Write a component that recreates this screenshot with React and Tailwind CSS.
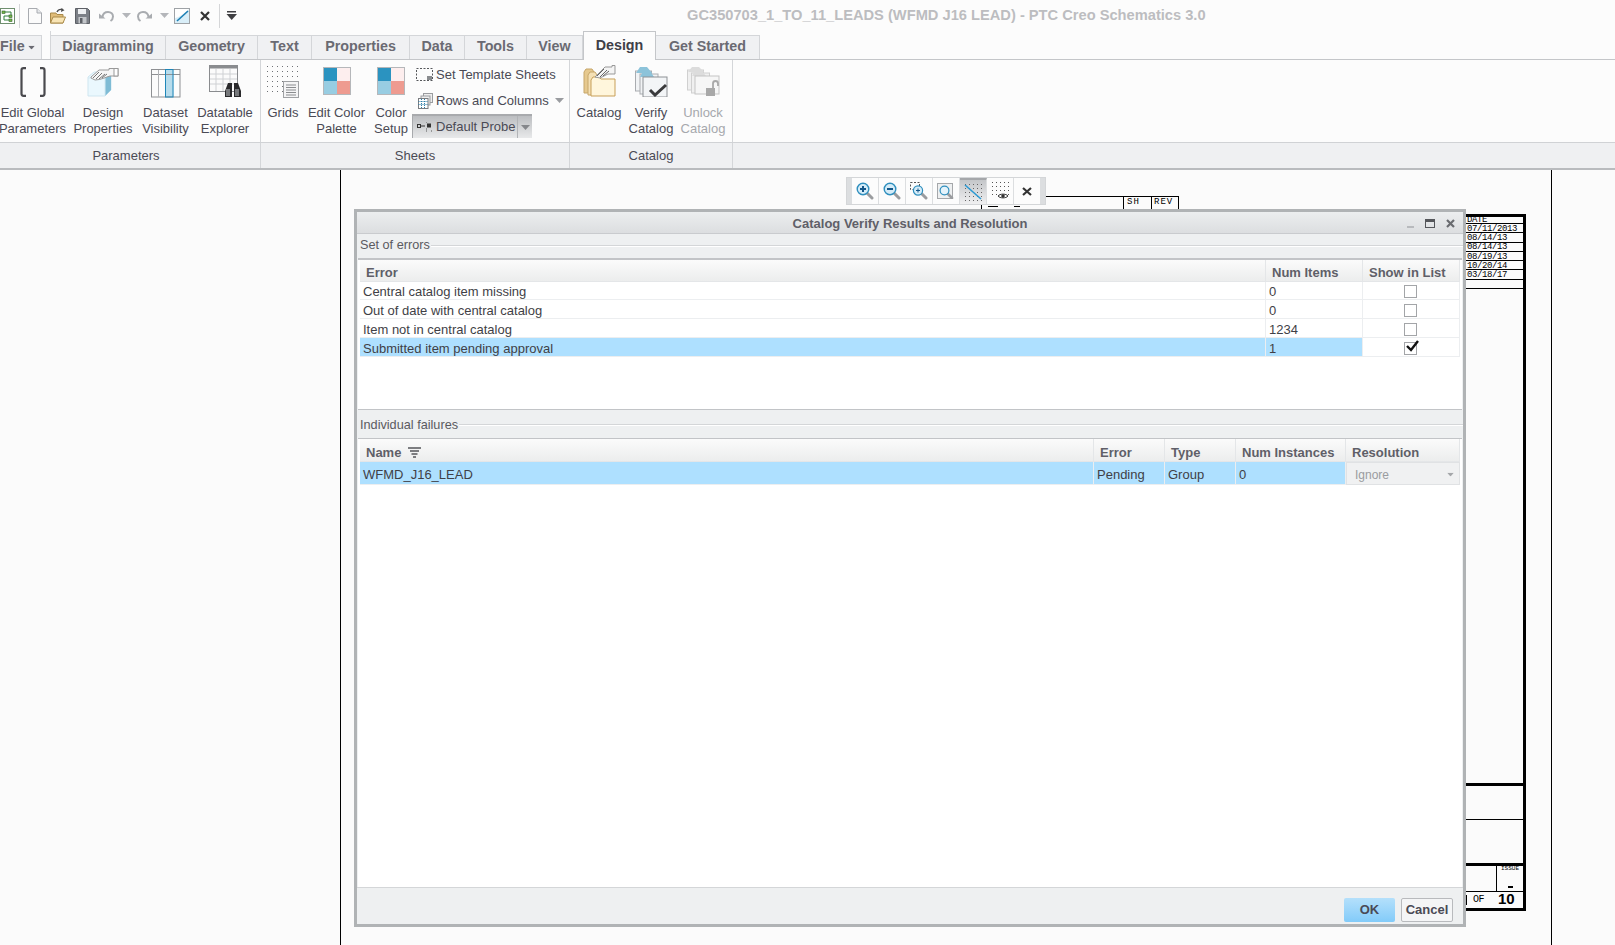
const FONT = 'font-["Liberation_Sans",Arial,sans-serif]'

function Caret({ color = '#8f9196', className = '' }) {
    return (
        <svg width="9" height="5" viewBox="0 0 9 5" className={className}>
            <path d="M0 0H9L4.5 5Z" fill={color} />
        </svg>
    )
}

function QuickAccess() {
    return (
        <div className="flex items-center w-[687px] h-[31px] shrink-0">
            <svg width="15" height="16" viewBox="0 0 15 16">
                <rect x="0.5" y="0.5" width="14" height="15" fill="#fff" stroke="#6f8f6f" />
                <path d="M3 4H11V8H4V12H11" fill="none" stroke="#2f7d3a" />
                <rect x="2" y="3" width="3" height="2.5" fill="#79b84a" stroke="#2f5f2a" strokeWidth="0.6" />
                <rect x="9" y="7" width="3" height="2.5" fill="#79b84a" stroke="#2f5f2a" strokeWidth="0.6" />
                <rect x="9" y="11" width="3" height="2.5" fill="#79b84a" stroke="#2f5f2a" strokeWidth="0.6" />
            </svg>
            <div className="w-px h-[24px] bg-[#d5d6d8] ml-[4px]" />
            <svg width="14" height="16" viewBox="0 0 14 16" className="ml-[8px]">
                <path d="M0.5 0.5H9L13.5 5V15.5H0.5Z" fill="#fbfbfb" stroke="#a8abb0" />
                <path d="M9 0.5V5H13.5" fill="#e5e7ea" stroke="#a8abb0" />
            </svg>
            <svg width="16" height="16" viewBox="0 0 16 16" className="ml-[8px]">
                <path d="M0.5 15V5H6L7 6.5H13V15Z" fill="#e0bc78" stroke="#a98a4a" />
                <path d="M0.5 15L3 9H15.5L13 15Z" fill="#f8e4b4" stroke="#a98a4a" />
                <path d="M7 4C8 1.5 10 1 12.5 1.5" fill="none" stroke="#4d4d4d" strokeWidth="1.4" />
                <path d="M11.5 0L14.5 2.2L11 4Z" fill="#4d4d4d" />
            </svg>
            <svg width="15" height="16" viewBox="0 0 15 16" className="ml-[9px]">
                <path d="M0.5 0.5H12.5L14.5 2.5V15.5H0.5Z" fill="#7c8087" stroke="#5d6066" />
                <rect x="3" y="1" width="8" height="5" fill="#eef0f2" />
                <rect x="3.5" y="9" width="8" height="6.5" fill="#c3c6ca" />
                <rect x="5" y="10" width="2.5" height="5" fill="#5d6066" />
            </svg>
            <svg width="15" height="12" viewBox="0 0 15 12" className="ml-[9px]">
                <path d="M3.5 7C4 3 7 2 9 2C12 2 14 4 14 6.5C14 8.5 13 10 11.5 11" fill="none" stroke="#a9acb0" strokeWidth="2" />
                <path d="M0 3.5L6.5 8.5H0Z" fill="#a9acb0" />
            </svg>
            <Caret color="#b4b6ba" className="ml-[8px]" />
            <svg width="15" height="12" viewBox="0 0 15 12" className="ml-[6px]">
                <path d="M11.5 7C11 3 8 2 6 2C3 2 1 4 1 6.5C1 8.5 2 10 3.5 11" fill="none" stroke="#a9acb0" strokeWidth="2" />
                <path d="M15 3.5L8.5 8.5H15Z" fill="#a9acb0" />
            </svg>
            <Caret color="#b4b6ba" className="ml-[8px]" />
            <svg width="16" height="16" viewBox="0 0 16 16" className="ml-[5px]">
                <rect x="0.5" y="0.5" width="15" height="15" fill="#d9eef8" stroke="#9ea2a6" />
                <path d="M1 1H15C11 5 6 9 1 10Z" fill="#fff" />
                <path d="M3 13L14 3" stroke="#1d7fb4" strokeWidth="1.6" />
            </svg>
            <svg width="10" height="10" viewBox="0 0 10 10" className="ml-[10px]">
                <path d="M1 1L9 9M9 1L1 9" stroke="#333" strokeWidth="2.2" />
            </svg>
            <div className="w-px h-[24px] bg-[#d5d6d8] ml-[9px]" />
            <svg width="12" height="9" viewBox="0 0 12 9" className="ml-[6px]">
                <rect x="1" y="0" width="9" height="1.5" fill="#3f3f42" />
                <path d="M0.5 3H11L5.7 9Z" fill="#3f3f42" />
            </svg>
        </div>
    )
}

function Tab({ label, width, active }) {
    if (active) {
        return (
            <div className={`${width} h-[29px] -mb-px z-10 flex items-center justify-center bg-[#fcfcfc] border border-b-0 border-[#c4c6c9] text-[14.3px] font-bold text-[#3f3f48]`}>
                {label}
            </div>
        )
    }
    return (
        <div className={`${width} h-[24px] pb-[2px] flex items-center justify-center bg-[#f0f1f3] border-t border-r border-[#d4d6d9] text-[14.3px] font-bold text-[#6a6a72]`}>
            {label}
        </div>
    )
}

function TabRow() {
    return (
        <div className="flex items-end h-[29px] border-b border-[#c4c6c9]">
            <div className="w-[42px] h-[24px] pb-[2px] flex items-center bg-[#f0f1f3] border-t border-r border-[#d4d6d9] text-[14.3px] font-bold text-[#6a6a72]">
                File
                <Caret color="#6a6a72" className="ml-[2px] mt-[2px] scale-75" />
            </div>
            <div className="w-[8px]" />
            <div className="flex items-end border-l border-[#d4d6d9]">
                <Tab label="Diagramming" width="w-[115px]" />
                <Tab label="Geometry" width="w-[92px]" />
                <Tab label="Text" width="w-[54px]" />
                <Tab label="Properties" width="w-[98px]" />
                <Tab label="Data" width="w-[55px]" />
                <Tab label="Tools" width="w-[62px]" />
                <Tab label="View" width="w-[56px]" />
                <Tab label="Design" width="w-[73px]" active />
                <Tab label="Get Started" width="w-[104px]" />
            </div>
        </div>
    )
}

function RibbonItem({ width, lines, disabled, children }) {
    return (
        <div className={`${width} shrink-0 flex flex-col items-center`}>
            <div className="h-[45px] w-full flex items-start justify-center pt-[5px]">{children}</div>
            <div className={`text-[13px] leading-[16px] text-center whitespace-nowrap ${disabled ? 'text-[#a6a8ad]' : 'text-[#4a4a55]'}`}>
                {lines.map((l) => <div key={l}>{l}</div>)}
            </div>
        </div>
    )
}

function GroupLabel({ width, label, pad = '' }) {
    return (
        <div className={`${width} ${pad} shrink-0 flex items-center justify-center text-[13px] text-[#4a4a55] border-r border-[#d4d6d9]`}>
            {label}
        </div>
    )
}

function ColorIcon() {
    return (
        <svg width="28" height="28" viewBox="0 0 28 28" className="mt-[2px]">
            <rect x="0" y="0" width="14" height="14" fill="#2b93c0" />
            <rect x="14" y="0" width="14" height="14" fill="#fdeeee" />
            <rect x="0" y="14" width="14" height="14" fill="#98cde2" />
            <rect x="14" y="14" width="14" height="14" fill="#ee9b90" />
            <rect x="0.5" y="0.5" width="27" height="27" fill="none" stroke="#b5b7ba" />
        </svg>
    )
}

function Ribbon() {
    return (
        <div className="border-b-2 border-[#b9bbbe]">
            <div className="flex h-[83px] border-b border-[#d0d2d5]">
                <div className="w-[261px] flex border-r border-[#d4d6d9]">
                    <RibbonItem width="w-[65px]" lines={['Edit Global', 'Parameters']}>
                        <svg width="26" height="30" viewBox="0 0 26 30" className="mt-[2px]">
                            <path d="M6 1.2H3.5C2.3 1.2 1.5 2 1.5 3.2V26.8C1.5 28 2.3 28.8 3.5 28.8H6" fill="none" stroke="#4a4a4e" strokeWidth="2.2" />
                            <path d="M20 1.2H22.5C23.7 1.2 24.5 2 24.5 3.2V26.8C24.5 28 23.7 28.8 22.5 28.8H20" fill="none" stroke="#4a4a4e" strokeWidth="2.2" />
                        </svg>
                    </RibbonItem>
                    <RibbonItem width="w-[76px]" lines={['Design', 'Properties']}>
                        <svg width="32" height="29" viewBox="0 0 32 29" className="mt-[3px]">
                            <path d="M1 9L7 4H24V22L18 28H1Z" fill="#eaf8fe" stroke="#cfe6f0" />
                            <path d="M18 10L24 4V22L18 28Z" fill="#7fbcd5" />
                            <path d="M1 10H18V28" fill="none" stroke="#d5eaf3" />
                            <path d="M4 9L12 2H22V0.5H31V8H23C19 9 14 12 8 12L4 10Z" fill="#f6f6f6" stroke="#9a9a9a" />
                            <path d="M6 10L12 4M9 11L15 5M12 11L18 6M15 10L20 6" stroke="#777" strokeWidth="1" />
                            <rect x="27" y="0.5" width="4" height="7.5" fill="#fff" stroke="#999" />
                        </svg>
                    </RibbonItem>
                    <RibbonItem width="w-[49px]" lines={['Dataset', 'Visibility']}>
                        <svg width="30" height="29" viewBox="0 0 30 29" className="mt-[4px]">
                            <rect x="15" y="1" width="7.5" height="27" fill="#b7dcec" />
                            <rect x="0.5" y="0.5" width="28.5" height="27.5" fill="#fff" fillOpacity="0" stroke="#8e9093" />
                            <path d="M0.5 5.5H29" stroke="#8e9093" />
                            <path d="M7.5 1V28" stroke="#b1b3b6" />
                            <rect x="14.5" y="0.5" width="7.5" height="27.5" fill="none" stroke="#1f86b8" />
                        </svg>
                    </RibbonItem>
                    <RibbonItem width="w-[70px]" lines={['Datatable', 'Explorer']}>
                        <svg width="33" height="33" viewBox="0 0 33 33">
                            <rect x="0.5" y="0.5" width="28" height="26" fill="#fbfbfb" stroke="#8a8c8f" />
                            <rect x="0.5" y="0.5" width="28" height="3" fill="#8a8c8f" />
                            <path d="M1 9H28M1 14H28M1 19H28M7 4V26M14 4V26M21 4V26" stroke="#cfd1d4" />
                            <path d="M16 32V26L19 18H23V32ZM25 32V18H29L32 26V32Z" fill="#2a2a2c" />
                            <rect x="17" y="24" width="4" height="7" fill="#77797c" />
                            <rect x="26" y="24" width="4" height="7" fill="#77797c" />
                        </svg>
                    </RibbonItem>
                </div>
                <div className="w-[309px] flex border-r border-[#d4d6d9]">
                    <RibbonItem width="w-[44px]" lines={['Grids']}>
                        <svg width="32" height="33" viewBox="0 0 32 33">
                            <g fill="#6f7175">
                                {[1, 6, 11, 16, 21, 26].map((y) =>
                                    [1, 6, 11, 16, 21, 26, 31].map((x) => <rect key={`${x}-${y}`} x={x - 1} y={y} width="1" height="1" />)
                                )}
                            </g>
                            <rect x="16.5" y="16.5" width="15" height="16" fill="#f4f4f5" stroke="#9fa1a4" />
                            <path d="M19 20H29M19 22.5H29M19 25H29M19 27.5H29M19 30H29" stroke="#8a8c8f" />
                        </svg>
                    </RibbonItem>
                    <RibbonItem width="w-[63px]" lines={['Edit Color', 'Palette']}>
                        <ColorIcon />
                    </RibbonItem>
                    <RibbonItem width="w-[46px]" lines={['Color', 'Setup']}>
                        <ColorIcon />
                    </RibbonItem>
                    <div className="flex-1 flex flex-col text-[13px] text-[#4a4a55] pt-[2px]">
                        <div className="h-[25px] flex items-center pl-[2px] whitespace-nowrap">
                            <svg width="17" height="13" viewBox="0 0 17 13" className="mr-[3px]">
                                <rect x="0.5" y="0.5" width="16" height="12" fill="none" stroke="#55575b" strokeDasharray="2 1.5" />
                                <rect x="11" y="8" width="5" height="4" fill="#8a8c8f" />
                            </svg>
                            Set Template Sheets
                        </div>
                        <div className="h-[27px] flex items-center pl-[4px] whitespace-nowrap">
                            <svg width="15" height="16" viewBox="0 0 15 16" className="mr-[3px]">
                                <rect x="5.5" y="0.5" width="9" height="9" fill="#eee" stroke="#9a9c9f" />
                                <rect x="3" y="3" width="9" height="9" fill="#eee" stroke="#9a9c9f" />
                                <rect x="0.5" y="5.5" width="9.5" height="10" fill="#fff" stroke="#7a7c80" />
                                <path d="M0.5 8.5H10M0.5 11.5H10M3.5 6V15.5M6.5 6V15.5" stroke="#2f7fa8" strokeDasharray="1 1" />
                            </svg>
                            Rows and Columns
                            <Caret color="#9a9ca0" className="ml-[6px]" />
                        </div>
                        <div className="w-[120px] h-[24px] flex bg-gradient-to-b from-[#bcbec1] to-[#e8e9ea] border-t-2 border-l border-[#a8aaad] -ml-[2px]">
                            <div className="flex-1 flex items-center pl-[4px] border-r border-[#b2b4b7]">
                                <svg width="15" height="11" viewBox="0 0 15 11" className="mr-[4px]">
                                    <rect x="0.5" y="2.5" width="3" height="3" fill="none" stroke="#333" />
                                    <path d="M4 4H8" stroke="#333" />
                                    <rect x="10" y="1.5" width="4" height="4" fill="#333" />
                                    <path d="M9 0H10M9 9H10M9 7H10M14 9H15" stroke="#555" />
                                </svg>
                                Default Probe
                            </div>
                            <div className="w-[14px] flex items-center justify-center">
                                <Caret color="#85878b" />
                            </div>
                        </div>
                    </div>
                </div>
                <div className="w-[163px] flex border-r border-[#d4d6d9]">
                    <RibbonItem width="w-[58px]" lines={['Catalog']}>
                        <svg width="33" height="32" viewBox="0 0 33 32">
                            <path d="M1 28V7L3 4H9L11 7V28Z" fill="#e6c98f" stroke="#c6a66a" />
                            <path d="M5 30V10L7 7H12L14 10V30Z" fill="#f4e0b5" stroke="#c6a66a" />
                            <path d="M8 31V15L10 12H16L18 14H32V31Z" fill="#fff6dc" stroke="#c79f58" />
                            <path d="M12 12L22 2H29V0.5H32V9H25L17 13Z" fill="#f4f4f4" stroke="#999" />
                            <path d="M14 11L21 4M17 12L24 5M20 11L26 6" stroke="#666" />
                        </svg>
                    </RibbonItem>
                    <RibbonItem width="w-[46px]" lines={['Verify', 'Catalog']}>
                        <svg width="33" height="32" viewBox="0 0 33 32">
                            <rect x="0.5" y="6" width="16" height="20" fill="#f1f3f5" stroke="#a9acb0" />
                            <path d="M1 8L5 2H12L17 8Z" fill="#8cc3da" />
                            <rect x="5" y="9" width="18" height="20" fill="#f1f3f5" stroke="#a9acb0" />
                            <path d="M5 12L8 6H15L19 12Z" fill="#8cc3da" />
                            <rect x="8" y="12" width="24" height="20" fill="#f3f5f7" stroke="#8e9195" />
                            <path d="M15 25L20 30L31 20" fill="none" stroke="#3a3a3c" strokeWidth="3" />
                        </svg>
                    </RibbonItem>
                    <RibbonItem width="w-[58px]" lines={['Unlock', 'Catalog']} disabled>
                        <svg width="33" height="32" viewBox="0 0 33 32">
                            <rect x="0.5" y="5" width="16" height="20" fill="#f0f0f0" stroke="#d0d0d0" />
                            <path d="M1 7L5 2H12L17 7Z" fill="#dcdcdc" />
                            <rect x="4.5" y="8" width="18" height="20" fill="#f0f0f0" stroke="#d0d0d0" />
                            <path d="M5 11L8 6H15L19 11Z" fill="#dcdcdc" />
                            <rect x="8" y="11" width="24" height="18" fill="#f6f6f6" stroke="#c4c4c4" />
                            <rect x="19" y="23" width="9" height="8" fill="#a8a8a8" />
                            <path d="M26 23V18.5C26 17 27 16 28.5 16C30 16 31 17 31 18.5V21" fill="none" stroke="#a8a8a8" strokeWidth="1.8" />
                        </svg>
                    </RibbonItem>
                </div>
            </div>
            <div className="flex h-[25px] bg-[#eff0f2]">
                <GroupLabel width="w-[261px]" label="Parameters" pad="pr-[8px]" />
                <GroupLabel width="w-[309px]" label="Sheets" />
                <GroupLabel width="w-[163px]" label="Catalog" />
            </div>
        </div>
    )
}

function ViewButton({ active, children }) {
    return (
        <div className={`h-full w-[27px] flex items-center justify-center border-r border-[#dcdee0] ${active ? 'bg-gradient-to-b from-[#c4c6c9] to-[#f0f0f1] border-t-2 border-t-[#a5a7aa]' : ''}`}>
            {children}
        </div>
    )
}

function Magnifier({ sign }) {
    return (
        <svg width="18" height="18" viewBox="0 0 18 18">
            <path d="M10 10L16 16" stroke="#9a9c9f" strokeWidth="3" strokeLinecap="round" />
            <circle cx="7" cy="7" r="5.8" fill="#d5ecf8" stroke="#2f8fbe" strokeWidth="1.4" />
            <path d="M4 7H10" stroke="#13578a" strokeWidth="2" />
            {sign === 'plus' && <path d="M7 4V10" stroke="#13578a" strokeWidth="2" />}
        </svg>
    )
}

function ViewToolbar() {
    return (
        <div className="absolute left-[846px] top-[7px] w-[200px] h-[28px] flex bg-[#fcfcfc] border border-[#d4d6d8] z-10">
            <div className="w-[5px] h-full bg-[#dcdee0]" />
            <ViewButton><Magnifier sign="plus" /></ViewButton>
            <ViewButton><Magnifier sign="minus" /></ViewButton>
            <ViewButton>
                <svg width="18" height="18" viewBox="0 0 18 18">
                    <rect x="0.5" y="0.5" width="9" height="7" fill="none" stroke="#555" strokeDasharray="2 1.5" />
                    <path d="M11 11L16 16" stroke="#9a9c9f" strokeWidth="3" strokeLinecap="round" />
                    <circle cx="8" cy="8.5" r="4.6" fill="#d5ecf8" stroke="#2f8fbe" strokeWidth="1.2" />
                    <path d="M6 8.5H10M8 6.5V10.5" stroke="#13578a" />
                </svg>
            </ViewButton>
            <ViewButton>
                <svg width="18" height="16" viewBox="0 0 18 16">
                    <rect x="0.5" y="0.5" width="15" height="15" fill="#eef0f1" stroke="#a5a7aa" />
                    <path d="M10 10L15 15" stroke="#9a9c9f" strokeWidth="2.6" strokeLinecap="round" />
                    <circle cx="7.5" cy="7.5" r="4.4" fill="#e4f3fb" stroke="#2f8fbe" strokeWidth="1.2" />
                </svg>
            </ViewButton>
            <ViewButton active>
                <svg width="18" height="18" viewBox="0 0 18 18">
                    <g fill="#666">
                        {[1, 5, 9, 13, 17].map((y) =>
                            [1, 5, 9, 13, 17].map((x) => <rect key={`${x}-${y}`} x={x} y={y} width="1" height="1" />)
                        )}
                    </g>
                    <path d="M1 2L17 16" stroke="#2b9ad4" strokeWidth="1.6" />
                </svg>
            </ViewButton>
            <ViewButton>
                <svg width="18" height="18" viewBox="0 0 18 18">
                    <g fill="#555">
                        {[0, 4, 8, 12].map((y) =>
                            [1, 5, 9, 13, 17].map((x) => <rect key={`${x}-${y}`} x={x} y={y} width="1" height="1" />)
                        )}
                    </g>
                    <path d="M7 14C9 11.5 15 11.5 17 14C15 16.5 9 16.5 7 14Z" fill="#fff" stroke="#333" />
                    <circle cx="12" cy="14" r="1.8" fill="#333" />
                </svg>
            </ViewButton>
            <div className="h-full flex-1 flex items-center justify-center">
                <svg width="10" height="9" viewBox="0 0 10 9">
                    <path d="M1 1L9 8M9 1L1 8" stroke="#333" strokeWidth="2.2" />
                </svg>
            </div>
            <div className="w-[5px] h-full bg-[#dcdee0]" />
        </div>
    )
}

// pieces of the schematic sheet showing round the dialog
function Line({ className }) {
    return <div className={`absolute bg-black ${className}`} />
}

function SheetText({ className, children }) {
    return <div className={`absolute font-["Liberation_Mono",monospace] text-black whitespace-nowrap ${className}`}>{children}</div>
}

const DATES = [
    { text: 'DATE', top: 'top-[46px]' },
    { text: '07/11/2013', top: 'top-[55px]' },
    { text: '08/14/13', top: 'top-[64px]' },
    { text: '08/14/13', top: 'top-[73px]' },
    { text: '08/19/13', top: 'top-[83px]' },
    { text: '10/20/14', top: 'top-[92px]' },
    { text: '03/18/17', top: 'top-[101px]' },
]

function SheetDrawing() {
    return (
        <>
            <Line className="left-[1046px] top-[26px] w-[132px] h-px" />
            <Line className="left-[981px] top-[34px] w-px h-[5px]" />
            <Line className="left-[988px] top-[36px] w-[10px] h-px" />
            <Line className="left-[1014px] top-[36px] w-[6px] h-px" />
            <Line className="left-[1123px] top-[26px] w-px h-[13px]" />
            <Line className="left-[1151px] top-[26px] w-px h-[13px]" />
            <Line className="left-[1178px] top-[26px] w-px h-[13px]" />
            <SheetText className="left-[1127px] top-[27px] text-[9px] leading-[11px] tracking-[1px]">SH</SheetText>
            <SheetText className="left-[1154px] top-[27px] text-[9px] leading-[11px] tracking-[1px]">REV</SheetText>

            <Line className="left-[1466px] top-[44px] w-[60px] h-[3px]" />
            <Line className="left-[1523px] top-[44px] w-[3px] h-[695px]" />
            {DATES.map((d) => (
                <SheetText key={d.top} className={`left-[1467px] text-[9px] leading-[9px] tracking-[-0.4px] ${d.top}`}>
                    {d.text}
                </SheetText>
            ))}
            <Line className="left-[1466px] top-[53px] w-[57px] h-px" />
            <Line className="left-[1466px] top-[62px] w-[57px] h-px" />
            <Line className="left-[1466px] top-[72px] w-[57px] h-px" />
            <Line className="left-[1466px] top-[81px] w-[57px] h-px" />
            <Line className="left-[1466px] top-[90px] w-[57px] h-px" />
            <Line className="left-[1466px] top-[99px] w-[57px] h-px" />
            <Line className="left-[1466px] top-[109px] w-[57px] h-px" />
            <Line className="left-[1466px] top-[118px] w-[57px] h-px" />

            <Line className="left-[1466px] top-[613px] w-[57px] h-[3px]" />
            <Line className="left-[1466px] top-[649px] w-[57px] h-px" />
            <Line className="left-[1466px] top-[693px] w-[57px] h-[3px]" />
            <Line className="left-[1496px] top-[696px] w-px h-[25px]" />
            <Line className="left-[1466px] top-[721px] w-[57px] h-px" />
            <Line className="left-[1466px] top-[738px] w-[60px] h-[3px]" />
            <Line className="left-[1466px] top-[725px] w-[1px] h-[10px]" />
            <SheetText className="left-[1501px] top-[696px] text-[6px] leading-[6px]">ISSUE</SheetText>
            <Line className="left-[1508px] top-[716px] w-[5px] h-[2px]" />
            <SheetText className="left-[1473px] top-[724px] text-[10px] leading-[12px] tracking-[-0.5px]">OF</SheetText>
            <SheetText className={`left-[1498px] top-[721px] ${FONT} text-[15px] leading-[15px] font-bold`}>10</SheetText>
        </>
    )
}

function HeaderCell({ children }) {
    return (
        <div className="flex items-center pl-[6px] pt-[5px] text-[13px] font-bold text-[#5f5f68] border-r border-b border-[#e4e6e8] bg-gradient-to-b from-[#fbfbfb] to-[#eceded] whitespace-nowrap">
            {children}
        </div>
    )
}

function Cell({ selected, children }) {
    return (
        <div className={`flex items-center pl-[3px] pt-[3px] text-[13px] text-[#3f3f46] border-r border-b border-[#eceef0] whitespace-nowrap ${selected ? 'bg-[#aee0ff]' : ''}`}>
            {children}
        </div>
    )
}

function CheckBox({ checked }) {
    return (
        <div className="flex items-center justify-center pt-[2px] border-r border-b border-[#eceef0]">
            <div className="relative w-[13px] h-[13px] bg-white border border-[#a3a5a8] -ml-[2px]">
                {checked && (
                    <svg width="16" height="15" viewBox="0 0 16 15" className="absolute -top-[4px] left-[0px]">
                        <path d="M2 7L6 11L13 2" fill="none" stroke="#111" strokeWidth="2.4" />
                    </svg>
                )}
            </div>
        </div>
    )
}

const ERRORS = [
    { name: 'Central catalog item missing', count: '0' },
    { name: 'Out of date with central catalog', count: '0' },
    { name: 'Item not in central catalog', count: '1234' },
    { name: 'Submitted item pending approval', count: '1', selected: true },
]

function SectionLabel({ label }) {
    return (
        <div className="flex items-center text-[12.7px] text-[#5a5a60] pl-[3px] whitespace-nowrap">
            {label}
            <div className="flex-1 h-[2px] ml-[1px] border-t border-[#d4d6d8] bg-white" />
        </div>
    )
}

function CatalogDialog() {
    return (
        <div className="absolute left-[354px] top-[39px] w-[1112px] h-[718px] z-20 flex flex-col bg-[#eef0f1] border-[3px] border-[#b0b3b5]">
            <div className="relative h-[22px] shrink-0 flex items-center justify-center bg-gradient-to-b from-[#eceeef] to-[#dcdee0] border-b border-[#c9cbce] text-[13px] font-bold text-[#5f5f68] pt-[2px]">
                Catalog Verify Results and Resolution
                <div className="absolute right-[8px] top-[7px] flex items-center gap-[11px]">
                    <div className="w-[7px] h-[2px] bg-[#b8babd] mt-[6px]" />
                    <div className="w-[10px] h-[9px] border border-t-[3px] border-[#55575b]" />
                    <svg width="9" height="9" viewBox="0 0 9 9">
                        <path d="M1 1L8 8M8 1L1 8" stroke="#6a6c70" strokeWidth="2.2" />
                    </svg>
                </div>
            </div>
            <div className="h-[24px] shrink-0 flex flex-col justify-center">
                <SectionLabel label="Set of errors" />
            </div>
            <div className="h-[152px] shrink-0 mx-[1px] pl-[1px] bg-white border-t-2 border-b border-[#c2c4c7]">
                <div className="grid grid-cols-[906px_97px_97px] grid-rows-[22px_18px_19px_19px_19px] w-[1100px] ml-px">
                    <HeaderCell>Error</HeaderCell>
                    <HeaderCell>Num Items</HeaderCell>
                    <HeaderCell>Show in List</HeaderCell>
                    {ERRORS.map((e) => (
                        <div key={e.name} className="contents">
                            <Cell selected={e.selected}>{e.name}</Cell>
                            <Cell selected={e.selected}>{e.count}</Cell>
                            <CheckBox checked={e.selected} />
                        </div>
                    ))}
                </div>
            </div>
            <div className="h-[28px] shrink-0 flex flex-col justify-center pt-[3px]">
                <SectionLabel label="Individual failures" />
            </div>
            <div className="h-[449px] shrink-0 mx-[1px] pl-[1px] bg-white border-t border-[#c2c4c7]">
                <div className="grid grid-cols-[734px_71px_71px_110px_114px] grid-rows-[23px_23px] w-[1100px] ml-px">
                    <HeaderCell>
                        Name
                        <svg width="13" height="12" viewBox="0 0 13 12" className="ml-[7px]">
                            <path d="M0 1H13M2 4H11M3.5 7H9.5M5 10H8" stroke="#55575b" strokeWidth="1.3" />
                        </svg>
                    </HeaderCell>
                    <HeaderCell>Error</HeaderCell>
                    <HeaderCell>Type</HeaderCell>
                    <HeaderCell>Num Instances</HeaderCell>
                    <HeaderCell>Resolution</HeaderCell>
                    <Cell selected>WFMD_J16_LEAD</Cell>
                    <Cell selected>Pending</Cell>
                    <Cell selected>Group</Cell>
                    <Cell selected>0</Cell>
                    <div className="flex items-center justify-between pl-[8px] pr-[4px] pt-[2px] text-[12px] text-[#9a9ca0] bg-[#f0f1f2] border border-[#e0e2e4]">
                        Ignore
                        <Caret color="#a5a7aa" className="scale-75" />
                    </div>
                </div>
            </div>
            <div className="flex-1 flex items-center justify-end pr-[10px] pt-[8px] gap-[6px] border-t border-[#d4d6d8] text-[13px] font-bold text-[#4a4a55]">
                <div className="w-[51px] h-[24px] flex items-center justify-center rounded-[2px] bg-gradient-to-b from-[#b4e0fb] to-[#82cbf9]">OK</div>
                <div className="w-[52px] h-[24px] flex items-center justify-center rounded-[2px] bg-[#f4f5f6] border border-[#b8babd]">Cancel</div>
            </div>
        </div>
    )
}

export default function App() {
    return (
        <div className={`${FONT} w-[1615px] h-[945px] flex flex-col overflow-hidden bg-[#fbfbfb] text-[#4a4a55]`}>
            <div className="bg-[#fcfcfc]">
                <div className="flex items-center">
                    <QuickAccess />
                    <div className="text-[14.67px] font-bold text-[#bcbdc0] whitespace-nowrap pb-[2px]">
                        GC350703_1_TO_11_LEADS (WFMD J16 LEAD) - PTC Creo Schematics 3.0
                    </div>
                </div>
                <TabRow />
                <Ribbon />
            </div>
            <div className="relative flex-1 flex">
                <div className="w-[341px] shrink-0 border-r border-black" />
                <div className="w-[1211px] shrink-0 border-r border-black" />
                <ViewToolbar />
                <SheetDrawing />
                <CatalogDialog />
            </div>
        </div>
    )
}
